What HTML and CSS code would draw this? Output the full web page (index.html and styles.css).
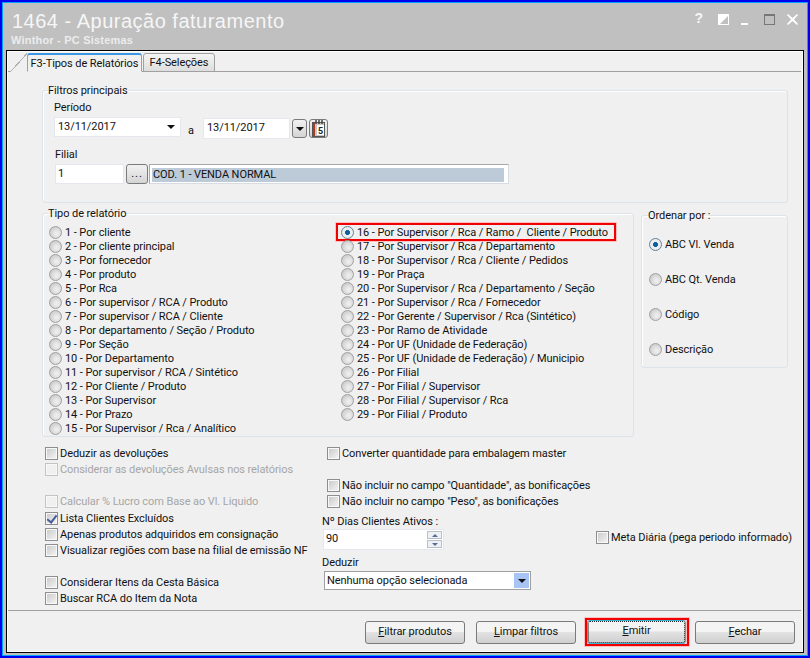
FILE: index.html
```html
<!DOCTYPE html>
<html lang="pt-BR">
<head>
    <meta charset="UTF-8">
    <title>1464 - Apuração faturamento</title>
    <link rel="stylesheet" href="styles.css">
</head>
<body>
<div class="window">
    <!-- barra de titulo -->
    <div class="titlebar">
        <div class="title-text">
            <div class="title">1464 - Apuração faturamento</div>
            <div class="subtitle">Winthor - PC Sistemas</div>
        </div>
        <div class="win-buttons">
            <span class="win-help">?</span>
            <svg class="win-half" width="11" height="11" viewBox="0 0 11 11"><rect width="11" height="11" fill="#fff"/><path d="M10 2V10H2Z" fill="#c0c0c0"/></svg>
            <svg class="win-min" width="7" height="2" viewBox="0 0 7 2"><rect width="7" height="2" fill="#fff"/></svg>
            <svg class="win-max" width="11" height="11" viewBox="0 0 11 11"><rect x=".5" y=".5" width="10" height="10" fill="none" stroke="#777"/><rect width="11" height="2" fill="#777"/></svg>
            <svg class="win-close" width="11" height="11" viewBox="0 0 11 11"><path d="M1 0 5.500 4 10 0 11 1 7 5.500 11 10 10 11 5.500 7 1 11 0 10 4 5.500 0 1Z" fill="#fff"/></svg>
        </div>
    </div>

    <div class="panel">
        <!-- abas -->
        <div class="tabs">
            <div class="tab tab-active">F3-Tipos de Relatórios</div>
            <div class="tab">F4-Seleções</div>
        </div>

        <div class="tab-body">
            <fieldset class="group group-filtros">
                <legend>Filtros principais</legend>
                <div class="lbl">Período</div>
                <div class="row-periodo">
                    <div class="input date-one">13/11/2017<span class="arrow"></span></div>
                    <span class="sep-a">a</span>
                    <div class="input date-two">13/11/2017</div>
                    <div class="btn-small btn-drop"><span class="arrow"></span></div>
                    <div class="btn-small btn-cal">
                        <svg width="15" height="17" viewBox="0 0 15 17">
                            <rect x="1.500" y="2.500" width="12" height="14" fill="#c8c8c8" stroke="#555"/>
                            <rect x="2" y="3" width="2" height="13" fill="#b03a20"/>
                            <rect x="6" y="5" width="7" height="10" fill="#fff"/>
                            <path d="M5 0V4M8 0V4M11 0V4" stroke="#444" stroke-width="1.500"/>
                            <text class="cal-day" x="7" y="14">5</text>
                        </svg>
                    </div>
                </div>
                <div class="lbl lbl-filial">Filial</div>
                <div class="row-filial">
                    <div class="input filial-cod">1</div>
                    <div class="btn-small btn-dots">...</div>
                    <div class="filial-desc"><span>COD. 1 - VENDA NORMAL</span></div>
                </div>
            </fieldset>

            <div class="groups-row">
                <fieldset class="group group-tipo">
                    <legend>Tipo de relatório</legend>
                    <div class="tipo-cols">
                        <div class="tipo-col">
                            <label class="radio"><i></i>1 - Por cliente</label>
                            <label class="radio"><i></i>2 - Por cliente principal</label>
                            <label class="radio"><i></i>3 - Por fornecedor</label>
                            <label class="radio"><i></i>4 - Por produto</label>
                            <label class="radio"><i></i>5 - Por Rca</label>
                            <label class="radio"><i></i>6 - Por supervisor / RCA / Produto</label>
                            <label class="radio"><i></i>7 - Por supervisor / RCA / Cliente</label>
                            <label class="radio"><i></i>8 - Por departamento / Seção / Produto</label>
                            <label class="radio"><i></i>9 - Por Seção</label>
                            <label class="radio"><i></i>10 - Por Departamento</label>
                            <label class="radio"><i></i>11 - Por supervisor / RCA / Sintético</label>
                            <label class="radio"><i></i>12 - Por Cliente / Produto</label>
                            <label class="radio"><i></i>13 - Por Supervisor</label>
                            <label class="radio"><i></i>14 - Por Prazo</label>
                            <label class="radio"><i></i>15 - Por Supervisor / Rca / Analítico</label>
                        </div>
                        <div class="tipo-col">
                            <label class="radio on marked"><i></i>16 - Por Supervisor / Rca / Ramo /&nbsp; Cliente / Produto</label>
                            <label class="radio"><i></i>17 - Por Supervisor / Rca / Departamento</label>
                            <label class="radio"><i></i>18 - Por Supervisor / Rca / Cliente / Pedidos</label>
                            <label class="radio"><i></i>19 - Por Praça</label>
                            <label class="radio"><i></i>20 - Por Supervisor / Rca / Departamento / Seção</label>
                            <label class="radio"><i></i>21 - Por Supervisor / Rca / Fornecedor</label>
                            <label class="radio"><i></i>22 - Por Gerente / Supervisor / Rca (Sintético)</label>
                            <label class="radio"><i></i>23 - Por Ramo de Atividade</label>
                            <label class="radio"><i></i>24 - Por UF (Unidade de Federação)</label>
                            <label class="radio"><i></i>25 - Por UF (Unidade de Federação) / Municipio</label>
                            <label class="radio"><i></i>26 - Por Filial</label>
                            <label class="radio"><i></i>27 - Por Filial / Supervisor</label>
                            <label class="radio"><i></i>28 - Por Filial / Supervisor / Rca</label>
                            <label class="radio"><i></i>29 - Por Filial / Produto</label>
                        </div>
                    </div>
                </fieldset>

                <fieldset class="group group-ordem">
                    <legend>Ordenar por :</legend>
                    <label class="radio on"><i></i>ABC Vl. Venda</label>
                    <label class="radio"><i></i>ABC Qt. Venda</label>
                    <label class="radio"><i></i>Código</label>
                    <label class="radio"><i></i>Descrição</label>
                </fieldset>
            </div>

            <div class="options">
                <div class="opt-col opt-left">
                    <label class="check"><i></i>Deduzir as devoluções</label>
                    <label class="check off"><i></i>Considerar as devoluções Avulsas nos relatórios</label>
                    <label class="check off gap-16"><i></i>Calcular % Lucro com Base ao Vl. Liquido</label>
                    <label class="check on gap-1"><i></i>Lista Clientes Excluídos</label>
                    <label class="check"><i></i>Apenas produtos adquiridos em consignação</label>
                    <label class="check"><i></i>Visualizar regiões com base na filial de emissão NF</label>
                    <label class="check gap-16"><i></i>Considerar Itens da Cesta Básica</label>
                    <label class="check"><i></i>Buscar RCA do Item da Nota</label>
                </div>
                <div class="opt-col opt-mid">
                    <label class="check"><i></i>Converter quantidade para embalagem master</label>
                    <label class="check gap-16"><i></i>Não incluir no campo "Quantidade", as bonificações</label>
                    <label class="check"><i></i>Não incluir no campo "Peso", as bonificações</label>
                    <div class="lbl lbl-dias">Nº Dias Clientes Ativos :</div>
                    <div class="input spin">90
                        <div class="spin-btns">
                            <span><b class="up"></b></span>
                            <span><b class="down"></b></span>
                        </div>
                    </div>
                    <div class="lbl lbl-deduzir">Deduzir</div>
                    <div class="select">Nenhuma opção selecionada<span class="select-btn"><span class="arrow"></span></span></div>
                </div>
                <div class="opt-col opt-right">
                    <label class="check"><i></i>Meta Diária (pega periodo informado)</label>
                </div>
            </div>
        </div>

        <!-- botoes -->
        <div class="footer">
            <div class="btn"><u>F</u>iltrar produtos</div>
            <div class="btn"><u>L</u>impar filtros</div>
            <div class="btn-mark"><div class="btn btn-focus"><u>E</u>mitir</div></div>
            <div class="btn"><u>F</u>echar</div>
        </div>
    </div>
</div>
</body>
</html>
```
FILE: styles.css
```css
* {
    margin: 0;
    padding: 0;
    box-sizing: border-box;
}

html, body {
    width: 810px;
    height: 658px;
    overflow: hidden;
}

body {
    font-family: Roboto, "Noto Sans", sans-serif;
    font-size: 11px;
    letter-spacing: -0.08px;
    color: #111;
    background: #c0c0c0;
}

.window {
    width: 810px;
    height: 658px;
    display: flex;
    flex-direction: column;
    background: #c0c0c0;
    border: 2px solid #0000f0;
    outline: 1px solid #00a4ff;
    outline-offset: -3px;
    padding: 1px 4px 3px 4px;
}

/* barra de titulo */
.titlebar {
    height: 47px;
    display: flex;
    justify-content: space-between;
    color: #f6f6f6;
}

.title-text {
    padding: 6px 0 0 6px;
}

.title {
    font-family: "Liberation Sans", Arial, sans-serif;
    font-size: 20px;
    line-height: 24px;
    letter-spacing: 0.5px;
}

.subtitle {
    font-family: "Liberation Sans", Arial, sans-serif;
    font-size: 11px;
    font-weight: bold;
    line-height: 13px;
    letter-spacing: 0.2px;
    margin: 1px 0 0 -1px;
    color: #ececec;
}

.win-buttons {
    display: flex;
    align-items: flex-start;
    padding: 7px 6px 0 0;
}

.win-buttons svg {
    flex: none;
    margin-top: 4px;
}

.win-half {
    margin-left: 15px;
}

.win-buttons .win-min {
    margin: 13px 0 0 12px;
}

.win-max {
    margin-left: 16px;
}

.win-close {
    margin-left: 12px;
}

.win-help {
    font-family: "Liberation Sans", Arial, sans-serif;
    font-size: 14px;
    font-weight: bold;
    line-height: 16px;
    letter-spacing: 0;
}

/* painel */
.panel {
    flex: 1;
    display: flex;
    flex-direction: column;
    background: #f0f0f0;
    border: 1px solid #000;
    border-right-width: 2px;
    border-bottom-width: 2px;
    outline: 1px solid #fff;
    outline-offset: -2px;
    min-height: 0;
}

.tabs {
    height: 21px;
    flex: none;
    display: flex;
    align-items: flex-end;
    padding: 1px 0 0 19px;
    border-bottom: 1px solid #a0a0a0;
    margin: 0 1px;
}

.tab {
    width: 72px;
    height: 19px;
    margin-bottom: -1px;
    text-align: center;
    line-height: 18px;
    border: 1px solid #a0a0a0;
    border-radius: 3px 3px 0 0;
    background: linear-gradient(#f4f4f4, #dedede);
    white-space: nowrap;
}

.tab-active {
    width: 115px;
    height: 19px;
    margin-right: 1px;
    background: #f0f0f0;
    border-bottom-color: #f0f0f0;
    border-top: 2px solid #3d95e6;
    line-height: 17px;
    position: relative;
}

/* canto inclinado da aba ativa */
.tab-active::before {
    content: "";
    position: absolute;
    left: -18px;
    top: -2px;
    width: 17px;
    height: 19px;
    background: linear-gradient(to bottom right, transparent 49%, #b0b0b0 49%, #b0b0b0 53%, #f0f0f0 53%);
}

.tab-body {
    flex: 1;
    padding: 12px 14px 0 35px;
}

/* grupos */
.group {
    border: 1px solid #dde3ea;
    border-radius: 3px;
    box-shadow: inset 1px 1px 0 #fff;
}

.group legend {
    margin-left: 5px;
    line-height: 13px;
}

.group-filtros {
    height: 119px;
    padding: 4px 0 0 11px;
}

.group-filtros legend {
    margin-left: -6px;
}

.lbl {
    line-height: 14px;
}

.row-periodo {
    display: flex;
    align-items: flex-start;
    margin-top: 2px;
}

.input {
    height: 20px;
    padding-left: 3px;
    background: #fff;
    border: 1px solid #e4e8ee;
    line-height: 18px;
    white-space: nowrap;
}

.date-one {
    width: 127px;
    position: relative;
}

.date-one .arrow {
    position: absolute;
    right: 5px;
    top: 7px;
}

.arrow {
    display: inline-block;
    width: 0;
    height: 0;
    border-left: 4px solid transparent;
    border-right: 4px solid transparent;
    border-top: 4px solid #111;
}

.sep-a {
    width: 22px;
    padding: 7px 0 0 7px;
    line-height: 14px;
}

.date-two {
    width: 87px;
    height: 21px;
    margin-top: 1px;
}

.btn-small {
    display: flex;
    align-items: center;
    justify-content: center;
    border: 1px solid #7a7a7a;
    border-radius: 3px;
    background: linear-gradient(#f2f2f2, #d4d4d4);
}

.btn-drop {
    width: 15px;
    height: 19px;
    margin: 2px 0 0 2px;
}

.btn-cal {
    width: 19px;
    height: 19px;
    margin: 2px 0 0 2px;
}

.cal-day {
    font-size: 9px;
    font-weight: bold;
    fill: #222;
}

.lbl-filial {
    margin-top: 9px;
    padding-left: 1px;
}

.row-filial {
    display: flex;
    margin: 2px 0 0 1px;
}

.filial-cod {
    width: 69px;
    padding-left: 2px;
}

.btn-dots {
    width: 22px;
    height: 20px;
    margin: 0 1px 0 2px;
    letter-spacing: 1px;
    line-height: 14px;
}

.filial-desc {
    width: 360px;
    height: 20px;
    padding: 3px 4px 2px 2px;
    background: #fff;
    border: 1px solid #d8dce2;
    border-top-color: #a8a8a8;
    border-left-color: #a8a8a8;
}

.filial-desc span {
    display: block;
    height: 14px;
    padding-left: 1px;
    line-height: 14px;
    background: #bdcbd9;
}

.groups-row {
    display: flex;
    gap: 7px;
    margin-top: 4px;
}

.group-tipo {
    width: 591px;
    height: 230px;
}

.tipo-cols {
    display: flex;
    padding: 5px 0 0 6px;
}

.tipo-col {
    width: 292px;
}

.group-ordem {
    width: 148px;
    height: 159px;
    margin-top: 2px;
    padding: 15px 0 0 7px;
}

.group-ordem legend {
    margin-left: -1px;
}

.group-ordem .radio {
    margin-bottom: 21px;
}

/* radios */
.radio {
    display: flex;
    align-items: center;
    height: 14px;
    white-space: nowrap;
}

.radio i {
    flex: none;
    width: 13px;
    height: 13px;
    margin-right: 3px;
    border: 1px solid #a0a0a0;
    border-radius: 50%;
    background: radial-gradient(circle at 60% 60%, #ececec 15%, #c4c4c4 90%);
}

.radio.on i {
    background: radial-gradient(circle, #0d5f9e 0 28%, #e8eef2 36% 70%, #c0c8d0 90%);
    border-color: #6d7f8e;
}

/* destaque vermelho */
.radio.marked {
    width: 276px;
    margin-left: -3px;
    padding-left: 3px;
    box-shadow: 0 0 0 2px #f00000, 0 0 0 3px #ffc0c0;
}

/* opcoes */
.options {
    display: flex;
    margin-top: 8px;
}

.opt-col {
    flex: none;
    display: flex;
    flex-direction: column;
}

.opt-left {
    width: 277px;
    margin-left: 3px;
}

.opt-mid {
    width: 274px;
}

.opt-mid .check {
    margin-left: 5px;
}

.opt-right {
    padding-top: 84px;
}

.check {
    display: flex;
    align-items: center;
    height: 16px;
    white-space: nowrap;
}

.check i {
    flex: none;
    position: relative;
    width: 13px;
    height: 13px;
    margin-right: 2px;
    border: 1px solid #8e8e8e;
    background: linear-gradient(135deg, #c8c8c8, #f6f6f6);
    box-shadow: inset 0 0 0 1px #f8f8f8;
}

.check.off {
    color: #a6a6a6;
}

.check.off i {
    border-color: #c4c4c4;
    background: #f0f0f0;
}

.check.on i::after {
    content: "";
    position: absolute;
    left: 3px;
    top: 0;
    width: 4px;
    height: 8px;
    border-right: 2px solid #4a5a9a;
    border-bottom: 2px solid #4a5a9a;
    transform: rotate(38deg);
}

.gap-16 {
    margin-top: 16px;
}

.gap-1 {
    margin-top: 1px;
}

.lbl-dias {
    margin-top: 6px;
}

.spin {
    position: relative;
    width: 121px;
    height: 21px;
    margin: 0 0 0 1px;
    padding-left: 2px;
}

.spin-btns {
    position: absolute;
    right: 1px;
    top: 1px;
    display: flex;
    flex-direction: column;
    gap: 1px;
}

.spin-btns span {
    display: flex;
    align-items: center;
    justify-content: center;
    width: 15px;
    height: 8px;
    border: 1px solid #b8c0c8;
    background: #eef0f4;
}

.spin-btns b {
    width: 0;
    height: 0;
    border-left: 3px solid transparent;
    border-right: 3px solid transparent;
}

.spin-btns .up {
    border-bottom: 3px solid #5a6a9a;
}

.spin-btns .down {
    border-top: 3px solid #5a6a9a;
}

.lbl-deduzir {
    margin-top: 6px;
}

.select {
    display: flex;
    justify-content: space-between;
    align-items: center;
    width: 207px;
    height: 19px;
    margin: 1px 0 0 2px;
    padding: 0 1px 0 2px;
    background: #fff;
    border: 1px solid #a0a0a0;
}

.select-btn {
    display: flex;
    align-items: center;
    justify-content: center;
    width: 15px;
    height: 15px;
    background: #a8c4f4;
}

/* rodape */
.footer {
    flex: none;
    height: 41px;
    display: flex;
    align-items: flex-start;
    justify-content: flex-end;
    gap: 11px;
    padding: 10px 6px 0 0;
    margin: 0 1px;
    border-top: 1px solid #a0a0a0;
}

.btn {
    width: 100px;
    height: 23px;
    text-align: center;
    line-height: 20px;
    border: 1px solid #7a7a7a;
    border-radius: 3px;
    background: linear-gradient(#f4f4f4 0 45%, #e2e2e2 50%, #cfcfcf);
}

.btn-mark {
    width: 104px;
    height: 28px;
    margin: -3px -5px 0 -2px;
    padding: 0 1px 0 0;
    border: 2px solid #f00000;
    box-shadow: 0 0 0 1px #ffc0c0, inset 0 0 0 1px #ffc0c0;
}

.btn-focus {
    width: 100%;
    height: 100%;
    border: 1px solid #3db0d8;
    line-height: 20px;
    outline: 1px dotted #222;
    outline-offset: -2px;
}
```
